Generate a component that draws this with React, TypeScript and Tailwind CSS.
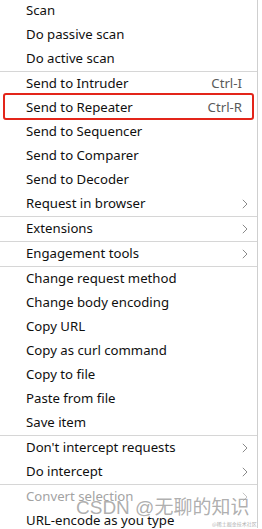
import React from "react";

type Item =
  | { type: "sep" }
  | { type: "item"; label: string; shortcut?: string; sub?: boolean; disabled?: boolean };

const items: Item[] = [
  { type: "item", label: "Scan" },
  { type: "item", label: "Do passive scan" },
  { type: "item", label: "Do active scan" },
  { type: "sep" },
  { type: "item", label: "Send to Intruder", shortcut: "Ctrl-I" },
  { type: "item", label: "Send to Repeater", shortcut: "Ctrl-R" },
  { type: "item", label: "Send to Sequencer" },
  { type: "item", label: "Send to Comparer" },
  { type: "item", label: "Send to Decoder" },
  { type: "item", label: "Request in browser", sub: true },
  { type: "sep" },
  { type: "item", label: "Extensions", sub: true },
  { type: "sep" },
  { type: "item", label: "Engagement tools", sub: true },
  { type: "sep" },
  { type: "item", label: "Change request method" },
  { type: "item", label: "Change body encoding" },
  { type: "item", label: "Copy URL" },
  { type: "item", label: "Copy as curl command" },
  { type: "item", label: "Copy to file" },
  { type: "item", label: "Paste from file" },
  { type: "item", label: "Save item" },
  { type: "sep" },
  { type: "item", label: "Don't intercept requests", sub: true },
  { type: "item", label: "Do intercept", sub: true },
  { type: "sep" },
  { type: "item", label: "Convert selection", sub: true, disabled: true },
  { type: "item", label: "URL-encode as you type" },
];

function Chevron({ disabled }: { disabled?: boolean }) {
  return (
    <svg width="6" height="10" viewBox="0 0 6 10" className="shrink-0">
      <path
        d="M0.8 0.8 L5 5 L0.8 9.2"
        fill="none"
        stroke={disabled ? "#c4c4c4" : "#8a8a8a"}
        strokeWidth="1"
      />
    </svg>
  );
}

export default function App() {
  return (
    <div
      className="relative w-[262px] h-[529px] overflow-hidden bg-white"
      style={{ fontFamily: '"Noto Sans", "Open Sans", Arial, sans-serif' }}
    >
      <div className="w-[258px] h-full border-r border-[#cfcfcf] bg-white flex flex-col -mt-[1px]">
        {items.map((it, i) =>
          it.type === "sep" ? (
            <div key={i} className="h-px bg-[#d6d6d6] shrink-0" />
          ) : (
            <div
              key={i}
              className={`h-[24px] shrink-0 flex items-center pl-[26px] pr-[9px] text-[13.2px] leading-none ${
                it.disabled ? "text-[#a3a3a3]" : "text-[#0f0f0f]"
              }`}
            >
              <span className="flex-1 whitespace-nowrap">{it.label}</span>
              {it.shortcut && (
                <span className="text-[#5a5a5a] mr-[6px] whitespace-nowrap">{it.shortcut}</span>
              )}
              {it.sub && <Chevron disabled={it.disabled} />}
            </div>
          )
        )}
      </div>

      <div className="absolute left-[3px] top-[93px] w-[251px] h-[27px] border-2 border-[#e3251a] rounded-[3px] pointer-events-none" />

      <div
        className="absolute left-[76px] top-[498px] text-[19px] leading-none whitespace-nowrap text-[#9a9a9a]/80 pointer-events-none"
        style={{ fontFamily: '"Liberation Sans", "Noto Sans CJK SC", sans-serif' }}
      >
        CSDN @无聊的知识
      </div>
      <div
        className="absolute left-[212px] top-[521px] text-[5px] leading-none whitespace-nowrap text-[#b0b0b0] pointer-events-none"
        style={{ fontFamily: '"Noto Sans CJK SC", sans-serif' }}
      >
        @稀土掘金技术社区
      </div>
    </div>
  );
}
